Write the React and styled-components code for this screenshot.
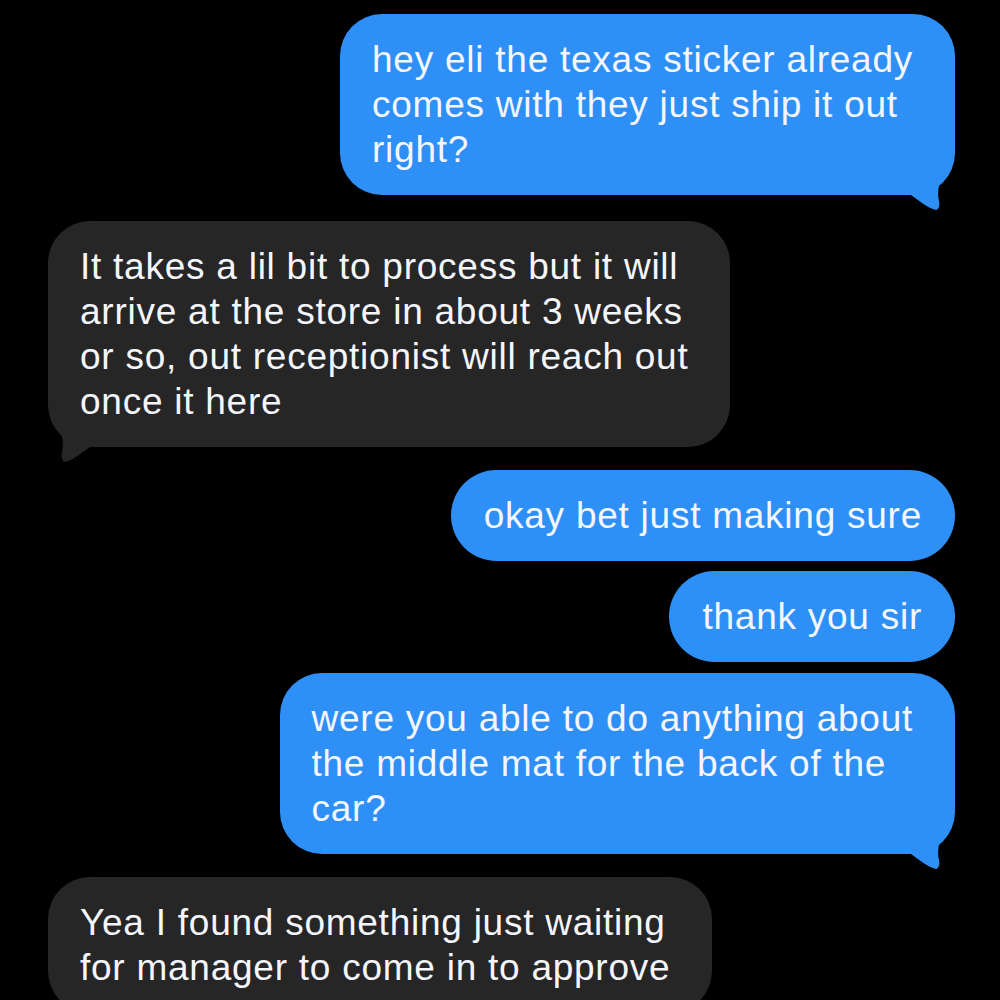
import React from 'react';
import styled, { createGlobalStyle } from 'styled-components';

const BLUE = '#2e8ff6';
const GRAY = '#262627';

const GlobalStyle = createGlobalStyle`
  html, body {
    margin: 0;
    background: #000;
    height: 100%;
    overflow: hidden;
  }
`;

const Thread = styled.div`
  display: flex;
  flex-direction: column;
  padding: 14px 45px 0 48px;
  font-family: "Liberation Sans", Arial, sans-serif;
`;

const Row = styled.div`
  display: flex;
  justify-content: ${({ sent }) => (sent ? 'flex-end' : 'flex-start')};
  margin-top: ${({ gap }) => gap}px;
`;

const Bubble = styled.div`
  position: relative;
  background: ${({ sent }) => (sent ? BLUE : GRAY)};
  color: #f4f6fb;
  font-size: 37px;
  letter-spacing: 0.75px;
  line-height: 45px;
  padding: 23px ${({ multi }) => (multi ? 42 : 33)}px 23px ${({ multi }) => (multi ? 32 : 33)}px;
  border-radius: ${({ multi }) => (multi ? 42 : 46)}px;
  white-space: nowrap;
`;

const Line = styled.span`
  display: block;
`;

const Tail = styled.svg`
  position: absolute;
  bottom: -16px;
  ${({ sent }) => (sent ? 'right: 10px;' : 'left: 8px; transform: scaleX(-1);')}
  width: 44px;
  height: 36px;
`;

const messages = [
  { sent: true, gap: 0, tail: true, lines: ['hey eli the texas sticker already', 'comes with they just ship it out', 'right?'] },
  { sent: false, gap: 26, tail: true, lines: ['It takes a lil bit to process but it will', 'arrive at the store in about 3 weeks', 'or so, out receptionist will reach out', 'once it here'] },
  { sent: true, gap: 23, lines: ['okay bet just making sure'] },
  { sent: true, gap: 10, lines: ['thank you sir'] },
  { sent: true, gap: 11, tail: true, lines: ['were you able to do anything about', 'the middle mat for the back of the', 'car?'] },
  { sent: false, gap: 23, lines: ['Yea I found something just waiting', 'for manager to come in to approve'] },
];

function BubbleTail({ sent }) {
  return (
    <Tail sent={sent} viewBox="0 0 44 36">
      <path
        d="M0 0 L40 0 C38 10 36 18 38 26 C39 30 38 34 35 35 C27 33 18 26 10 20 L0 20 Z"
        fill={sent ? BLUE : GRAY}
      />
    </Tail>
  );
}

export default function App() {
  return (
    <>
      <GlobalStyle />
      <Thread>
        {messages.map((m, i) => (
          <Row key={i} sent={m.sent} gap={m.gap}>
            <Bubble sent={m.sent} multi={m.lines.length > 1}>
              {m.lines.map((l, j) => (
                <Line key={j}>{l}</Line>
              ))}
              {m.tail && <BubbleTail sent={m.sent} />}
            </Bubble>
          </Row>
        ))}
      </Thread>
    </>
  );
}
